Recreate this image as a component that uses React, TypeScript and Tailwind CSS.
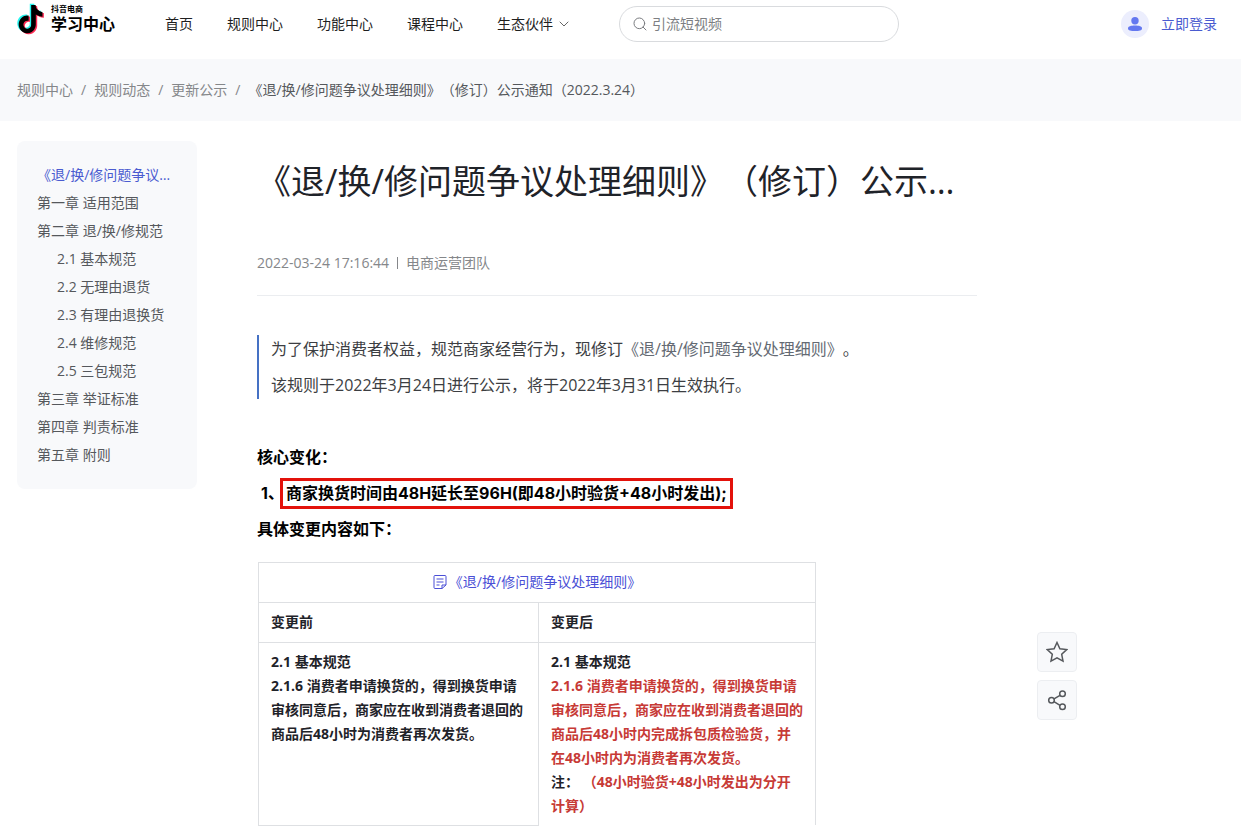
import React from 'react';
import { ChevronDown, Search } from 'lucide-react';
import clsx from 'clsx';

const navItems = [
    { name: '首页', href: '#home' },
    { name: '规则中心', href: '#rules' },
    { name: '功能中心', href: '#features' },
    { name: '课程中心', href: '#courses' },
    { name: '生态伙伴', href: '#partners', hasMenu: true },
];

const breadcrumbs = ['规则中心', '规则动态', '更新公示'];

const tocItems = [
    { name: '《退/换/修问题争议处理细则》', level: 1, active: true },
    { name: '第一章 适用范围', level: 1 },
    { name: '第二章 退/换/修规范', level: 1 },
    { name: '2.1 基本规范', level: 2 },
    { name: '2.2 无理由退货', level: 2 },
    { name: '2.3 有理由退换货', level: 2 },
    { name: '2.4 维修规范', level: 2 },
    { name: '2.5 三包规范', level: 2 },
    { name: '第三章 举证标准', level: 1 },
    { name: '第四章 判责标准', level: 1 },
    { name: '第五章 附则', level: 1 },
];

const articleTitle = '《退/换/修问题争议处理细则》（修订）公示通知（2022.3.24）';

const notePath =
    'M12.525.02c1.31-.02 2.61-.01 3.91-.02.08 1.53.63 3.09 1.75 4.17 1.12 1.11 2.7 1.62 4.24 1.79v4.03c-1.44-.05-2.89-.35-4.2-.97-.57-.26-1.1-.59-1.62-.93-.01 2.92.01 5.84-.02 8.75-.08 1.4-.54 2.79-1.35 3.94-1.31 1.92-3.58 3.17-5.91 3.21-1.43.08-2.86-.31-4.08-1.03-2.02-1.19-3.44-3.37-3.65-5.71-.02-.5-.03-1-.01-1.49.18-1.9 1.12-3.72 2.58-4.96 1.66-1.44 3.98-2.13 6.15-1.72.02 1.48-.04 2.96-.04 4.44-.99-.32-2.15-.23-3.02.37-.63.41-1.11 1.04-1.36 1.75-.21.51-.15 1.07-.14 1.61.24 1.64 1.82 3.02 3.5 2.87 1.12-.01 2.19-.66 2.77-1.61.19-.33.4-.67.41-1.06.1-1.79.06-3.57.07-5.36.01-4.03-.01-8.05.02-12.07z';

function Logo() {
    return (
        <a href="#home" className="flex items-center gap-1.5 pb-2.5 text-black">
            <svg width="28" height="32" viewBox="0 0 28 32" aria-hidden="true">
                <g transform="translate(-1.5 0.8) scale(1.14 1.18)">
                    <path d={notePath} fill="#25f4ee" />
                </g>
                <g transform="translate(1.3 3) scale(1.14 1.18)">
                    <path d={notePath} fill="#fe2c55" />
                </g>
                <g transform="translate(-0.1 1.9) scale(1.14 1.18)">
                    <path d={notePath} fill="#000" />
                </g>
            </svg>
            <span className="flex flex-col pb-0.5 font-bold">
                <span className="text-[8px] leading-3">抖音电商</span>
                <span className="text-base leading-[18px]">学习中心</span>
            </span>
        </a>
    );
}

function Header() {
    return (
        <header className="flex h-[59px] items-center pb-[11px] pl-[17px] pr-6 text-sm">
            <Logo />
            <nav className="ml-[50px] flex items-center gap-[34px] text-[#1f1f1f]">
                {navItems.map((item) => (
                    <a key={item.name} href={item.href} className="flex items-center gap-[3px]">
                        {item.name}
                        {item.hasMenu && <ChevronDown size={16} strokeWidth={1.5} className="text-[#666]" />}
                    </a>
                ))}
            </nav>
            <label className="ml-[47px] flex h-9 w-[280px] items-center gap-1 rounded-full border border-[#d9dbde] px-3">
                <Search size={16} strokeWidth={1.5} className="text-[#7a7c80]" />
                <input
                    type="search"
                    aria-label="搜索"
                    placeholder="引流短视频"
                    className="min-w-0 flex-1 bg-transparent outline-none placeholder:text-[#7d7f83]"
                />
            </label>
            <a href="#login" className="ml-auto flex items-center gap-3 text-[#4a5bd0]">
                <span className="flex size-7 items-center justify-center rounded-full bg-[#eceefd]">
                    <svg width="14" height="14" viewBox="0 0 14 14" fill="#6478f0" aria-hidden="true">
                        <circle cx="7" cy="3.7" r="3.7" />
                        <path d="M0 11.4C0 9.4 3 8.6 7 8.6s7 .8 7 2.8c0 2-3 2.6-7 2.6s-7-.6-7-2.6z" />
                    </svg>
                </span>
                立即登录
            </a>
        </header>
    );
}

function Breadcrumb() {
    return (
        <nav aria-label="面包屑" className="flex h-[62px] items-center gap-2 bg-[#f8f9fb] px-[17px] text-sm text-[#85878a]">
            {breadcrumbs.map((name) => (
                <React.Fragment key={name}>
                    <a href="#rules">{name}</a>
                    <span>/</span>
                </React.Fragment>
            ))}
            <span className="text-[#55585c]">{articleTitle}</span>
        </nav>
    );
}

function Toc() {
    return (
        <aside className="w-[180px] shrink-0 rounded-lg bg-[#f8f9fb] p-5 text-sm leading-7">
            <ul>
                {tocItems.map((item) => (
                    <li key={item.name}>
                        <a
                            href="#article"
                            className={clsx(
                                'block truncate',
                                item.level === 2 && 'pl-5',
                                item.active ? 'text-[#4a5bd0]' : 'text-[#55585c]'
                            )}
                        >
                            {item.name}
                        </a>
                    </li>
                ))}
            </ul>
        </aside>
    );
}

function ChangeTable() {
    return (
        <table className="ml-px mt-[15px] w-[558px] table-fixed border-collapse text-left text-sm leading-6 text-[#1f2329]">
            <colgroup>
                <col className="w-[280px]" />
                <col />
            </colgroup>
            <thead>
                <tr className="h-10">
                    <th colSpan={2} className="border border-[#dee0e3] text-center font-normal">
                        <a href="#detail" className="inline-flex items-center gap-0.5 text-[#4a4fd6]">
                            <svg width="14" height="14" viewBox="0 0 14 14" fill="none" stroke="currentColor" aria-hidden="true">
                                <path d="M9 13.5H2a1 1 0 0 1-1-1v-11a1 1 0 0 1 1-1h10a1 1 0 0 1 1 1V10L9 13.5z" />
                                <path d="M9 13.5V10h4M3.500 4h7M3.500 7h7M3.500 10h3" />
                            </svg>
                            《退/换/修问题争议处理细则》
                        </a>
                    </th>
                </tr>
                <tr className="h-10">
                    <th className="border border-[#dee0e3] px-3 pb-0.5 font-bold">变更前</th>
                    <th className="border border-[#dee0e3] px-3 pb-0.5 font-bold">变更后</th>
                </tr>
            </thead>
            <tbody className="align-top font-bold">
                <tr>
                    <td className="border border-[#dee0e3] py-[7px] pl-3 pr-2">
                        <p>2.1 基本规范</p>
                        <p>2.1.6 消费者申请换货的，得到换货申请审核同意后，商家应在收到消费者退回的商品后48小时为消费者再次发货。</p>
                    </td>
                    <td className="border-x border-[#dee0e3] px-3 py-[7px]">
                        <p>2.1 基本规范</p>
                        <p className="text-[#c73a36]">
                            2.1.6 消费者申请换货的，得到换货申请审核同意后，商家应在收到消费者退回的商品后48小时内完成拆包质检验货，并在48小时内为消费者再次发货。
                        </p>
                        <p>
                            注：{' '}
                            <span className="text-[#c73a36]">
                                （48小时验货+48小时发出为分开
                                <br />
                                计算）
                            </span>
                        </p>
                    </td>
                </tr>
            </tbody>
        </table>
    );
}

function Article() {
    return (
        <main id="article" className="ml-15 w-[720px] min-w-0">
            <h1 className="mt-4 truncate text-[34px] leading-[48px] text-[#1f2329]">{articleTitle}</h1>
            <div className="mt-12 flex items-center gap-2 border-b border-[#ebedf0] pb-[22px] text-sm text-[#85878a]">
                <time>2022-03-24 17:16:44</time>
                <span className="h-3 w-px bg-[#85878a]" />
                <span>电商运营团队</span>
            </div>

            <blockquote className="mt-[39px] space-y-2 border-l-2 border-[#4571c4] pl-3 leading-7 text-[#3c3e42]">
                <p>
                    为了保护消费者权益，规范商家经营行为，现修订
                    <a href="#detail" className="text-[#646a73]">《退/换/修问题争议处理细则》</a>。
                </p>
                <p>该规则于2022年3月24日进行公示，将于2022年3月31日生效执行。</p>
            </blockquote>

            <section className="mt-10 font-bold leading-9 text-black">
                <h2>核心变化：</h2>
                <p className="flex items-center pl-1 font-['Inter','Noto_Sans_CJK_SC',sans-serif]">
                    1、
                    <span className="-ml-1 border-3 border-[#e3120b] px-[3px] leading-[25px]">
                        商家换货时间由48H延长至96H(即48小时验货+48小时发出);
                    </span>
                </p>
                <h2>具体变更内容如下：</h2>
            </section>

            <ChangeTable />
        </main>
    );
}

function FloatingActions() {
    return (
        <div className="fixed bottom-[110px] right-[164px] flex flex-col gap-2 text-[#55585c]">
            <button
                type="button"
                aria-label="收藏"
                className="flex size-10 items-center justify-center rounded border border-[#eceef1] bg-[#f8f9fb]"
            >
                <svg width="22" height="22" viewBox="0 0 22 22" fill="none" stroke="currentColor" strokeWidth="1.5" aria-hidden="true">
                    <path d="M11 1.500l2.900 6.200 6.800.9-5 4.700 1.300 6.800-6-3.300-6 3.300 1.300-6.800-5-4.700 6.800-.9L11 1.500z" />
                </svg>
            </button>
            <button
                type="button"
                aria-label="分享"
                className="flex size-10 items-center justify-center rounded border border-[#eceef1] bg-[#f8f9fb]"
            >
                <svg width="22" height="22" viewBox="0 0 22 22" fill="none" stroke="currentColor" strokeWidth="1.5" aria-hidden="true">
                    <circle cx="5.500" cy="11.300" r="2.800" />
                    <circle cx="16.500" cy="4.800" r="2.800" />
                    <circle cx="16.500" cy="17.800" r="2.800" />
                    <path d="M8 9.900l6-3.600M8 12.700l6 3.600" />
                </svg>
            </button>
        </div>
    );
}

export default function App() {
    return (
        <div
            lang="zh-CN"
            className="bg-white font-['Open_Sans','Noto_Sans_CJK_SC',sans-serif] [text-spacing-trim:space-all]"
        >
            <Header />
            <Breadcrumb />
            <div className="flex items-start px-[17px] pt-5">
                <Toc />
                <Article />
            </div>
            <FloatingActions />
        </div>
    );
}
